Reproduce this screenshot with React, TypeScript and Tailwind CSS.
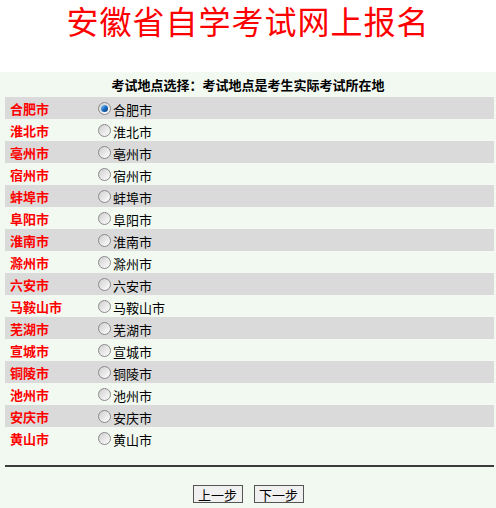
import React from "react";

const cities = [
  "合肥市",
  "淮北市",
  "亳州市",
  "宿州市",
  "蚌埠市",
  "阜阳市",
  "淮南市",
  "滁州市",
  "六安市",
  "马鞍山市",
  "芜湖市",
  "宣城市",
  "铜陵市",
  "池州市",
  "安庆市",
  "黄山市",
];

const Radio: React.FC<{ checked: boolean }> = ({ checked }) => (
  <span className="relative inline-block h-[13px] w-[13px] shrink-0 rounded-full border border-[#8a8a8a] bg-gradient-to-br from-[#cfcfcf] to-[#ffffff]">
    {checked && (
      <span className="absolute left-[2px] top-[2px] h-[7px] w-[7px] rounded-full bg-gradient-to-br from-[#8fd0ff] via-[#1d6fc4] to-[#0a3d7a]" />
    )}
  </span>
);

const App: React.FC = () => {
  const [selected, setSelected] = React.useState("合肥市");

  return (
    <div
      className="w-[496px] h-[508px] overflow-hidden bg-[#f1f9f1] text-[13px] text-black"
      style={{ fontFamily: '"Noto Sans CJK SC", "Noto Sans", sans-serif' }}
    >
      <div className="h-[72px] bg-white text-center">
        <div className="text-[32px] leading-[40px] text-[#ff0000] tracking-[1px] whitespace-nowrap">
          安徽省自学考试网上报名
        </div>
      </div>

      <div className="h-[25px] flex items-center justify-center font-bold leading-none">
        考试地点选择：考试地点是考生实际考试所在地
      </div>

      <div className="mx-[5px] w-[489px]">
        {cities.map((city, i) => (
          <div
            key={city}
            className={`flex h-[22px] items-center ${
              i % 2 === 0 ? "bg-[#dadada]" : ""
            }`}
          >
            <span className="w-[93px] pl-[5px] font-bold text-[#ff0000] leading-none">
              {city}
            </span>
            <label
              className="flex items-center gap-[2px] leading-none cursor-pointer"
              onClick={() => setSelected(city)}
            >
              <Radio checked={selected === city} />
              <span className="mt-[2px]">{city}</span>
            </label>
          </div>
        ))}
      </div>

      <div className="mx-[5px] mt-[16px] w-[489px] border-t-2 border-[#3c3c3c]" />

      <div className="mt-[18px] flex justify-center gap-[11px]">
        <button
          type="button"
          className="h-[18px] w-[50px] border border-[#555555] bg-[#f0f0f0] text-[13px] leading-none"
        >
          上一步
        </button>
        <button
          type="button"
          className="h-[18px] w-[50px] border border-[#555555] bg-[#f0f0f0] text-[13px] leading-none"
        >
          下一步
        </button>
      </div>
    </div>
  );
};

export default App;
